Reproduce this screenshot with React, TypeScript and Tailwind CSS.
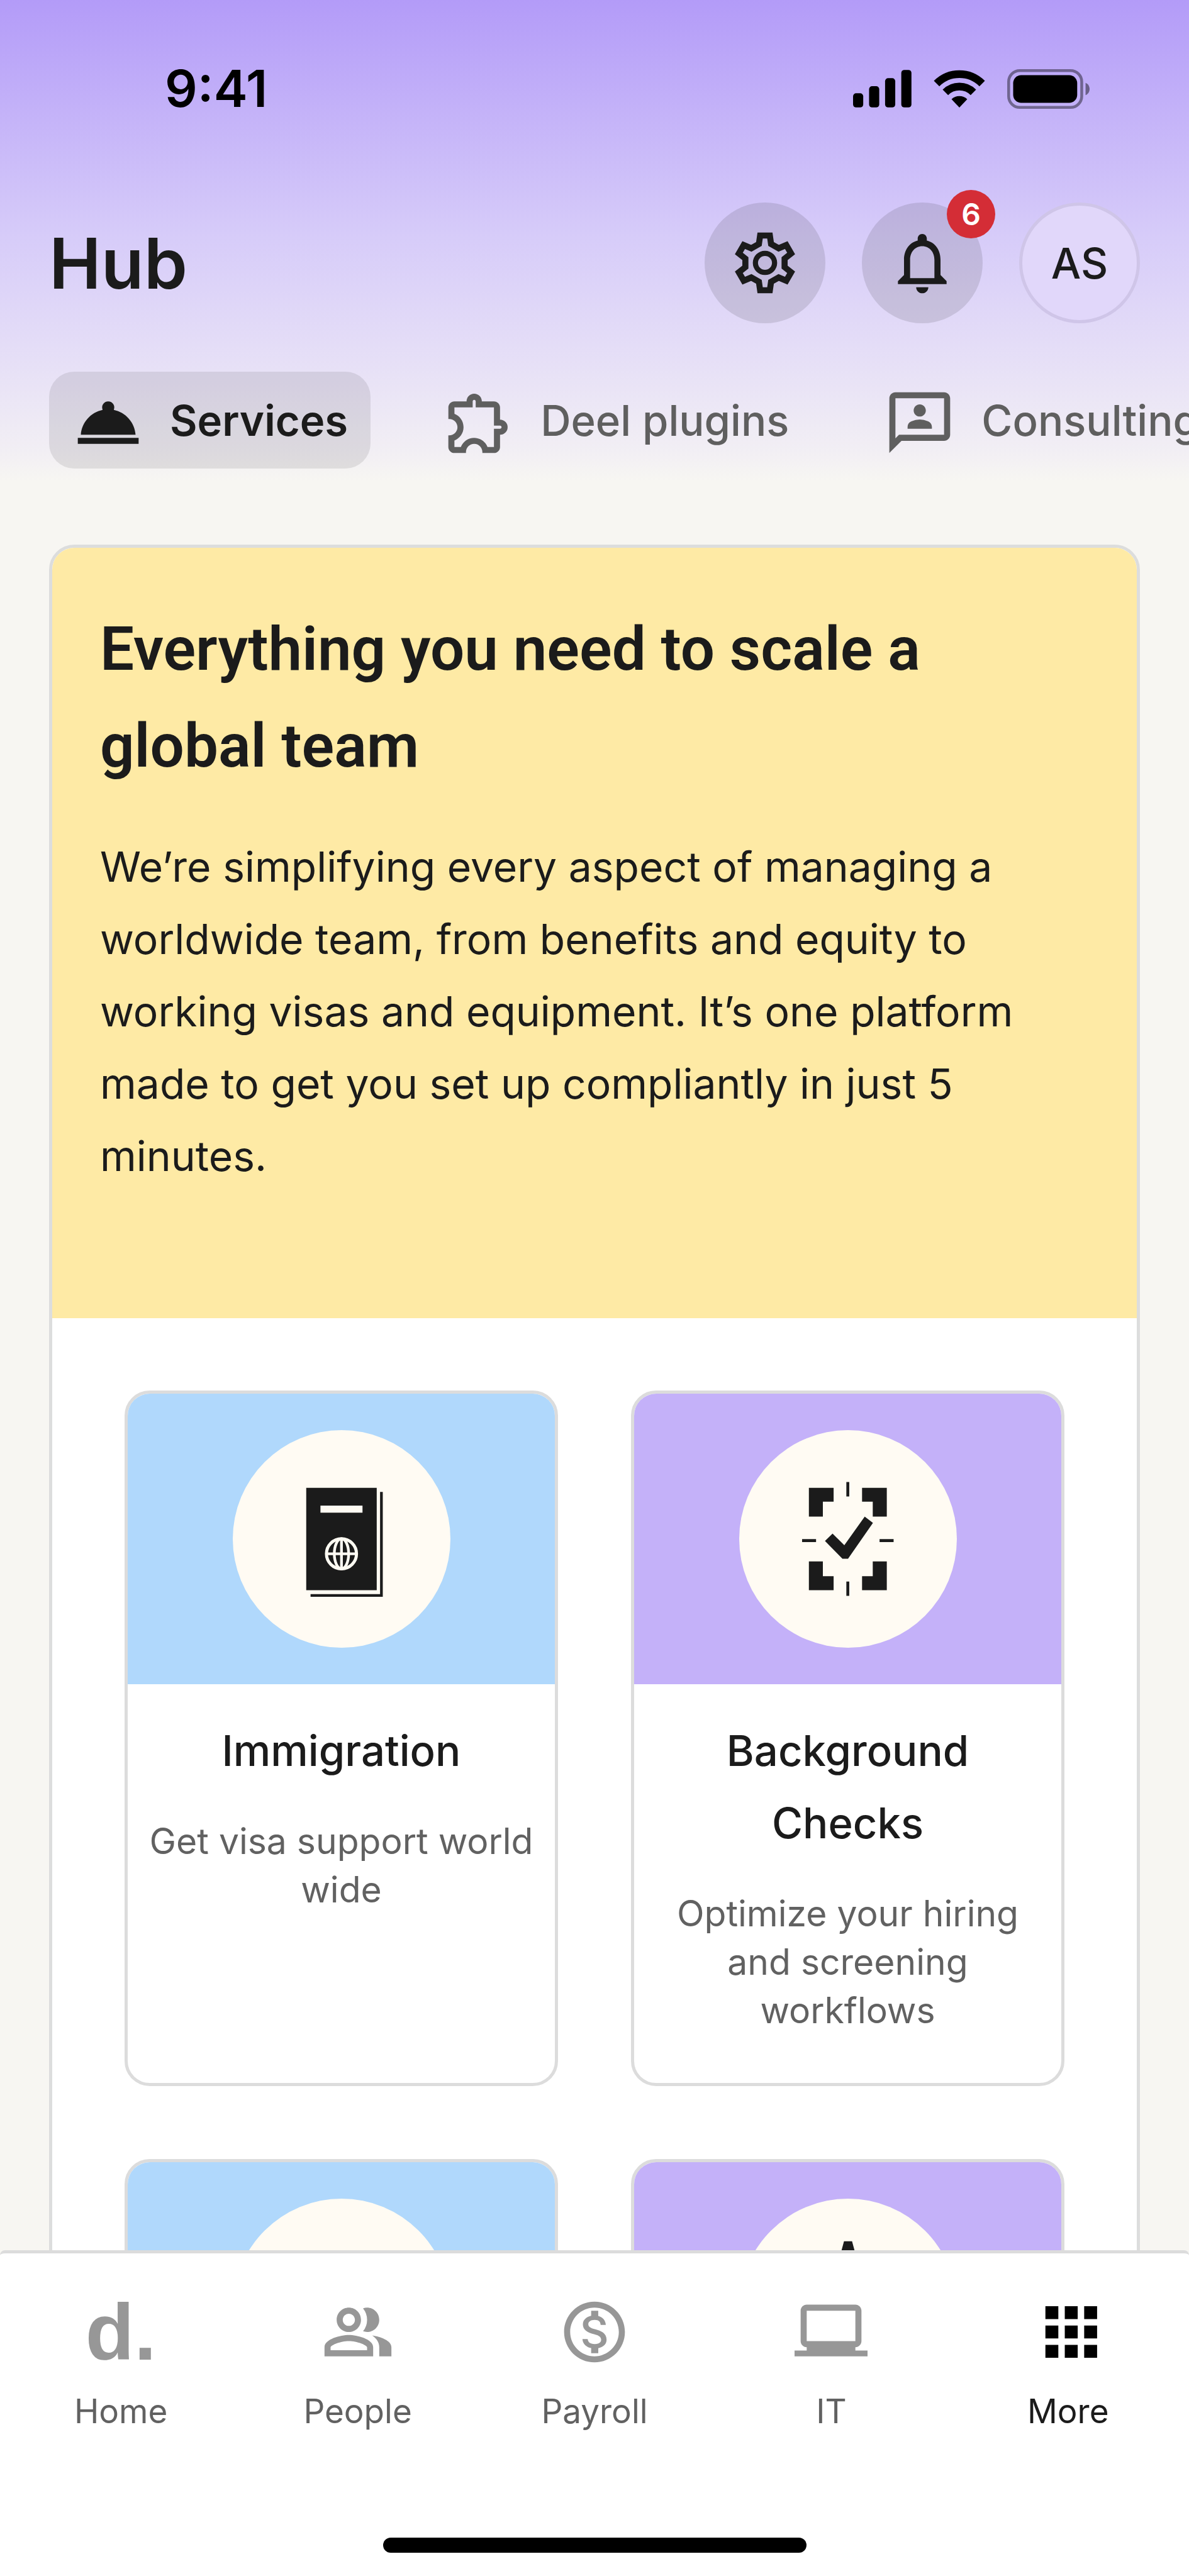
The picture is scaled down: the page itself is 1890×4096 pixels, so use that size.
import React from 'react';
import {
  MdNotificationsNone,
  MdOutline3P,
  MdOutlineExtension,
  MdOutlineMonetizationOn,
  MdOutlinePeopleAlt,
  MdRoomService,
} from 'react-icons/md';

const tabs = [
  { label: 'Services', icon: MdRoomService, active: true },
  { label: 'Deel plugins', icon: MdOutlineExtension, active: false },
  { label: 'Consulting', icon: MdOutline3P, active: false },
];

const services = [
  { title: 'Immigration', text: 'Get visa support world wide', art: PassportArt, tint: 'bg-[#b0d8fc]' },
  { title: 'Background Checks', text: 'Optimize your hiring and screening workflows', art: CheckArt, tint: 'bg-[#c4b1f9]' },
];

const navItems = [
  { label: 'Home', icon: DeelMark, active: false },
  { label: 'People', icon: MdOutlinePeopleAlt, active: false },
  { label: 'Payroll', icon: MdOutlineMonetizationOn, active: false },
  { label: 'IT', icon: LaptopIcon, active: false },
  { label: 'More', icon: GridIcon, active: true },
];

export default function App() {
  return (
    <div className="flex h-screen flex-col overflow-hidden bg-[linear-gradient(to_bottom,#b39bf8_0,#d6cbf9_370px,#e5def7_560px,#f2eff4_720px,#f7f6f2_765px)] font-['Inter',sans-serif] text-[#1b1b1b]">
      <StatusBar />

      {/* Header */}
      <header className="mt-10 flex shrink-0 items-center justify-between px-[78px]">
        <h1 className="text-[111px] leading-none font-semibold">Hub</h1>
        <div className="flex gap-[58px]">
          <button aria-label="Settings" className="flex size-48 items-center justify-center rounded-full bg-[#1b1b1b]/12">
            <SettingsIcon className="size-[116px]" />
          </button>
          <button aria-label="Notifications" className="relative flex size-48 items-center justify-center rounded-full bg-[#1b1b1b]/12">
            <MdNotificationsNone className="size-[116px]" />
            <span className="absolute -top-5 -right-5 flex size-[77px] items-center justify-center rounded-full bg-[#d42d36] text-[48px] leading-none font-semibold text-white">
              6
            </span>
          </button>
          <button aria-label="Account" className="flex size-48 items-center justify-center rounded-full border-[5px] border-[#cfc5e8] bg-[#e1d7fa] text-[67px] leading-none font-medium">
            AS
          </button>
        </div>
      </header>

      {/* Tabs */}
      <nav className="mt-[77px] flex shrink-0 gap-[78px] overflow-x-auto px-[78px] [scrollbar-width:none]">
        {tabs.map((tab) => (
          <button
            key={tab.label}
            className={`flex h-[154px] shrink-0 items-center gap-10 rounded-[40px] px-9 text-[67px] leading-none ${
              tab.active ? 'bg-[#1b1b1b]/10 font-semibold' : 'font-medium text-[#5f5f5f]'
            }`}
          >
            <tab.icon className="mt-2 size-[116px]" />
            {tab.label}
          </button>
        ))}
      </nav>

      <main className="mt-[121px] min-h-0 flex-1 overflow-y-auto px-[78px] [scrollbar-width:none]">
        <section className="overflow-hidden rounded-[40px] border-[5px] border-[#dcdddd] bg-white">
          <div className="bg-[#feeaa5] px-[76px] pt-[84px] pb-[200px]">
            <h2 className="font-['Roboto',sans-serif] text-[96px] leading-[154px] font-semibold">
              Everything you need to scale a global team
            </h2>
            <p className="mt-[58px] text-[66px] leading-[115px]">
              We’re simplifying every aspect of managing a worldwide team, from benefits and equity to working visas and
              equipment. It’s one platform made to get you set up compliantly in just 5 minutes.
            </p>
          </div>

          <div className="grid grid-cols-2 gap-[116px] p-[115px]">
            {services.map((service) => (
              <article key={service.title} className="overflow-hidden rounded-[40px] border-[5px] border-[#dcdcdc]">
                <CardArt tint={service.tint} art={service.art} />
                <div className="px-8 pt-12 pb-[77px] text-center">
                  <h3 className="text-[67px] leading-[115px] font-medium">{service.title}</h3>
                  <p className="mt-12 text-[57px] leading-[77px] text-[#616161]">{service.text}</p>
                </div>
              </article>
            ))}
            <article className="overflow-hidden rounded-[40px] border-[5px] border-[#dcdcdc]">
              <CardArt tint="bg-[#b0d8fc]" />
            </article>
            <article className="overflow-hidden rounded-[40px] border-[5px] border-[#dcdcdc]">
              <CardArt tint="bg-[#c4b1f9]" art={PeakArt} />
            </article>
          </div>
        </section>
      </main>

      {/* Bottom navigation */}
      <footer className="shrink-0 rounded-t-lg border-t-[5px] border-[#dcdcdc] bg-white px-1 pt-[67px] pb-[37px]">
        <nav className="grid grid-cols-5">
          {navItems.map((item) => (
            <a
              key={item.label}
              href="#"
              className={`flex flex-col items-center gap-9 text-[53px] leading-[64px] ${item.active ? 'text-[#1b1b1b]' : 'text-[#616161]'}`}
            >
              <item.icon className={`size-[116px] ${item.active ? 'text-black' : 'text-[#979797]'}`} />
              {item.label}
            </a>
          ))}
        </nav>
        <div className="mx-auto mt-[169px] h-6 w-[673px] rounded-full bg-black" />
      </footer>
    </div>
  );
}

function StatusBar() {
  return (
    <div className="flex h-[282px] shrink-0 items-center justify-between pr-[157px] pl-[262px] text-black">
      <span className="text-[81px] leading-none font-semibold">9:41</span>
      <div className="flex items-center gap-[35px]">
        <svg viewBox="0 0 95 61" className="h-[60px] w-[93px]" fill="currentColor">
          <rect x="0" y="38" width="16.5" height="23" rx="5" />
          <rect x="26" y="26.4" width="16.5" height="34.6" rx="5" />
          <rect x="52" y="13.5" width="16.5" height="47.5" rx="5" />
          <rect x="78.3" y="0" width="16.5" height="61" rx="5" />
        </svg>
        <svg viewBox="0 0 83 61" className="h-[60px] w-[82px]" fill="none" stroke="currentColor" strokeWidth="12.5">
          <path d="M4.7 22.2A52 52 0 0 1 78.3 22.2" />
          <path d="M18.9 36.4A32 32 0 0 1 64.1 36.4" />
          <path d="M41.5 61 28.8 47.5A18.5 18.5 0 0 1 54.2 47.5Z" fill="currentColor" stroke="none" />
        </svg>
        <svg viewBox="0 0 134 64" className="h-[63px] w-[132px]" fill="currentColor">
          <rect x="2.3" y="2.3" width="118" height="59.4" rx="18" fill="none" stroke="currentColor" strokeWidth="4.6" opacity="0.42" />
          <rect x="9.6" y="9.6" width="103.4" height="44.8" rx="13" />
          <path d="M126.5 22c4 1.5 6.5 5.5 6.5 10s-2.5 8.5-6.5 10z" opacity="0.45" />
        </svg>
      </div>
    </div>
  );
}

function CardArt({ tint, art: Art }: { tint: string; art?: React.ComponentType }) {
  return (
    <div className={`flex h-[462px] items-center justify-center ${tint}`}>
      <div className="size-[346px] rounded-full bg-[#fffbf3]">{Art && <Art />}</div>
    </div>
  );
}

function PassportArt() {
  return (
    <svg viewBox="0 0 352 352" className="size-full" fill="none">
      <path d="M118.8 93.3h114v165.6h-114z" fill="#1b1b1b" />
      <path d="M240.4 100v167.5H125.8" stroke="#1b1b1b" strokeWidth="4.4" />
      <path d="M141.8 122h68v11.5h-68z" fill="#fffbf3" />
      <g stroke="#fffbf3" strokeWidth="4.4">
        <circle cx="175.8" cy="200" r="24.3" strokeWidth="5" />
        <ellipse cx="175.8" cy="200" rx="11.6" ry="24.3" />
        <path d="M151 200h49.6M175.8 175v50" />
      </g>
    </svg>
  );
}

function CheckArt() {
  return (
    <svg viewBox="0 0 352 352" className="size-full" fill="#1b1b1b">
      <path d="M112.7 93.3h40v22.4h-17.4v24.3h-22.6zM198.7 93.3h40v46.7h-22.7v-24.3h-17.3z" />
      <path d="M112.7 212.3h22.6v24h17.4v22.7h-40zM238.7 212.3v46.7h-40v-22.7h17.3v-24z" />
      <path d="M173.3 84h4.7v23.3h-4.7zM173.3 245h4.7v23h-4.7zM101.7 176.3h22.6v4.7h-22.6zM227 176.3h22.7v4.7H227z" />
      <path d="M151 167.3l19 19L203 140l13.3 10L176 208h-9l-28.3-28.7z" />
    </svg>
  );
}

function PeakArt() {
  return (
    <svg viewBox="0 0 352 352" className="size-full" fill="#1b1b1b">
      <path d="M169.5 69h13L210 170h-68z" />
    </svg>
  );
}

function SettingsIcon({ className }: { className?: string }) {
  return (
    <svg viewBox="0 0 24 24" className={className} fill="none" stroke="currentColor" strokeWidth="2">
      <path d="M10.4 3h3.2l.4 2.8 2.5 1.4 2.5-1.05 1.6 2.75-2.15 1.7v2.8l2.15 1.7-1.6 2.75-2.5-1.05-2.5 1.4-.4 2.8h-3.2l-.4-2.8-2.5-1.4-2.5 1.05-1.6-2.75 2.15-1.7v-2.8L3.4 8.9 5 6.15l2.5 1.05L10 5.8z" />
      <circle cx="12" cy="12" r="3.15" strokeWidth="1.7" />
    </svg>
  );
}

function LaptopIcon({ className }: { className?: string }) {
  return (
    <svg viewBox="0 0 24 24" className={className} fill="currentColor">
      <path fillRule="evenodd" d="M4 3h16c1.1 0 2 .9 2 2v10c0 1.1-.9 2-2 2v1.1h4V20H0v-1.9h4V17c-1.1 0-2-.9-2-2V5c0-1.1.9-2 2-2zm0 2v10h16V5z" />
    </svg>
  );
}

function GridIcon({ className }: { className?: string }) {
  return (
    <svg viewBox="-1 0 24 24" className={className} fill="currentColor">
      <path d="M3.5 3.5h4.25v4.25H3.5zM9.87 3.5h4.25v4.25H9.87zM16.25 3.5h4.25v4.25h-4.25z" />
      <path d="M3.5 9.87h4.25v4.25H3.5zM9.87 9.87h4.25v4.25H9.87zM16.25 9.87h4.25v4.25h-4.25z" />
      <path d="M3.5 16.25h4.25v4.25H3.5zM9.87 16.25h4.25v4.25H9.87zM16.25 16.25h4.25v4.25h-4.25z" />
    </svg>
  );
}

function DeelMark({ className }: { className?: string }) {
  return (
    <span className={`flex items-center justify-center font-['Liberation_Sans',sans-serif] text-[127px] leading-none font-bold ${className}`}>
      d.
    </span>
  );
}
